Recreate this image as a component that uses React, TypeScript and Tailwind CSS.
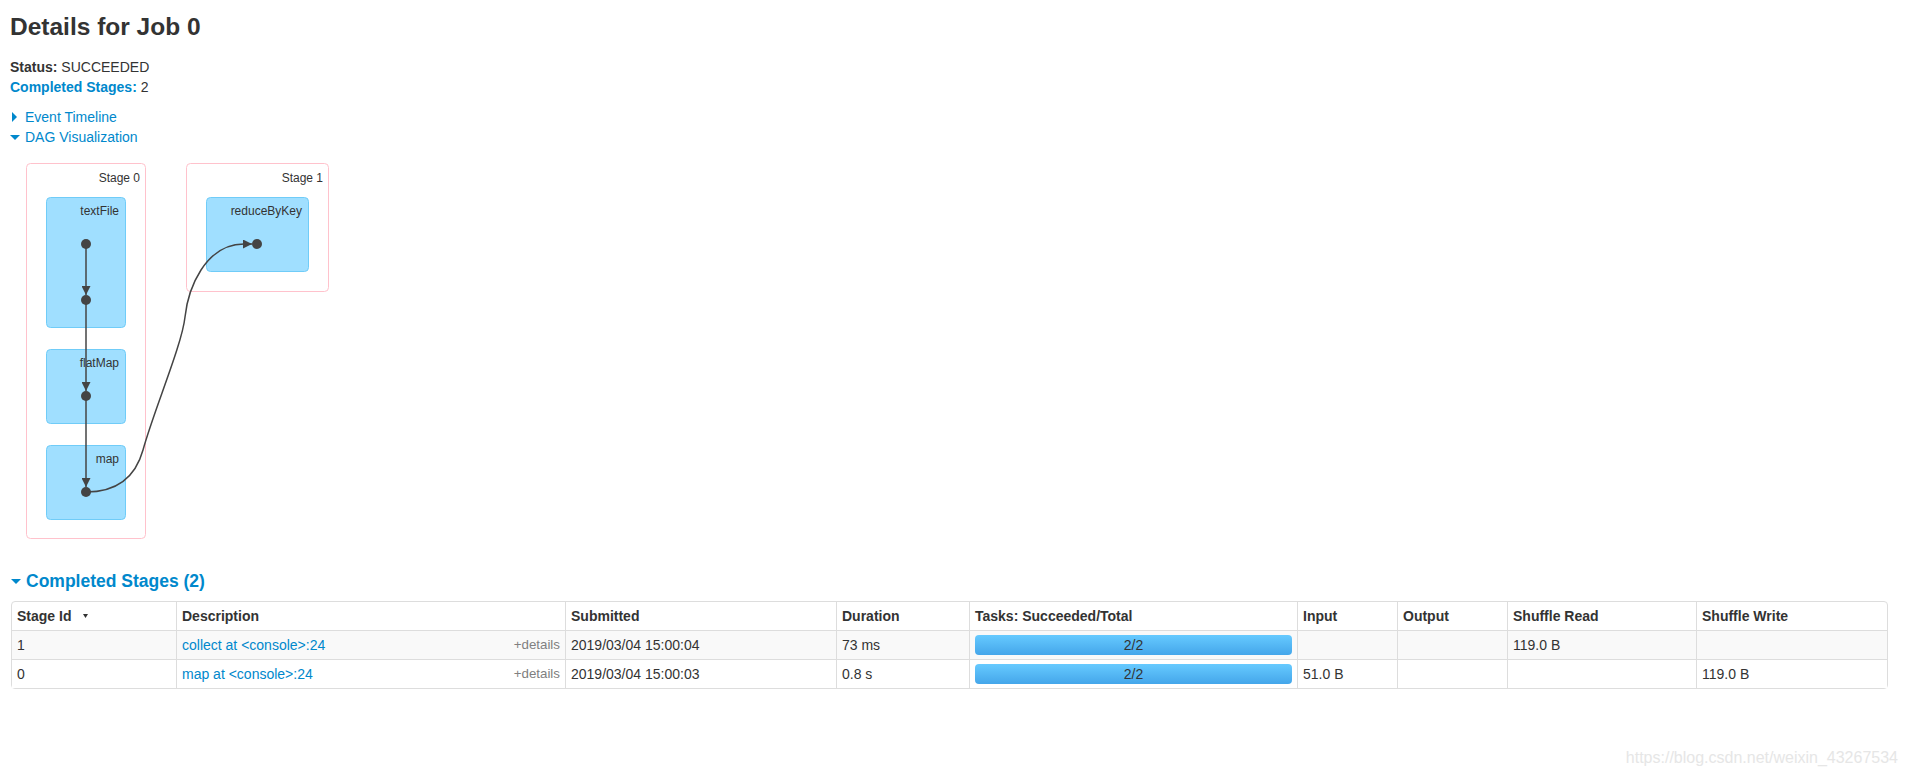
import React from "react";

const columns = [
  { label: "Stage Id", width: 164, sort: true },
  { label: "Description", width: 389 },
  { label: "Submitted", width: 271 },
  { label: "Duration", width: 133 },
  { label: "Tasks: Succeeded/Total", width: 328 },
  { label: "Input", width: 100 },
  { label: "Output", width: 110 },
  { label: "Shuffle Read", width: 189 },
  { label: "Shuffle Write", width: 191 },
];

const stages = [
  {
    id: "1",
    description: "collect at <console>:24",
    submitted: "2019/03/04 15:00:04",
    duration: "73 ms",
    tasks: "2/2",
    input: "",
    output: "",
    shuffleRead: "119.0 B",
    shuffleWrite: "",
  },
  {
    id: "0",
    description: "map at <console>:24",
    submitted: "2019/03/04 15:00:03",
    duration: "0.8 s",
    tasks: "2/2",
    input: "51.0 B",
    output: "",
    shuffleRead: "",
    shuffleWrite: "119.0 B",
  },
];

function ArrowOpen() {
  return (
    <span className="inline-block w-0 h-0 border-l-[5px] border-r-[5px] border-t-[5px] border-l-transparent border-r-transparent border-t-[#0088cc]" />
  );
}

function ArrowClosed() {
  return (
    <span className="inline-block w-0 h-0 border-t-[5px] border-b-[5px] border-l-[5px] border-t-transparent border-b-transparent border-l-[#0088cc]" />
  );
}

function DagViz() {
  const edge = "#444";
  return (
    <svg width={340} height={400} viewBox="0 147 340 400" className="block">
      <defs>
        <marker
          id="arrowhead"
          viewBox="0 0 10 10"
          refX={10}
          refY={5}
          markerUnits="userSpaceOnUse"
          markerWidth={10}
          markerHeight={9}
          orient="auto"
        >
          <path d="M0,0 L10,5 L0,10 z" fill={edge} />
        </marker>
      </defs>

      {/* stage clusters */}
      <rect x={26.5} y={163.5} width={119} height={375} rx={4} fill="#fff" stroke="#ffc2cc" />
      <rect x={186.5} y={163.5} width={142} height={128} rx={4} fill="#fff" stroke="#ffc2cc" />
      <text x={140} y={182} fontSize={12} textAnchor="end" fill="#333">
        Stage 0
      </text>
      <text x={323} y={182} fontSize={12} textAnchor="end" fill="#333">
        Stage 1
      </text>

      {/* rdd operation clusters */}
      <rect x={46.5} y={197.5} width={79} height={130} rx={4} fill="#a0dfff" stroke="#70ccf8" />
      <rect x={46.5} y={349.5} width={79} height={74} rx={4} fill="#a0dfff" stroke="#70ccf8" />
      <rect x={46.5} y={445.5} width={79} height={74} rx={4} fill="#a0dfff" stroke="#70ccf8" />
      <rect x={206.5} y={197.5} width={102} height={74} rx={4} fill="#a0dfff" stroke="#70ccf8" />
      <text x={119} y={215} fontSize={12} textAnchor="end" fill="#333">
        textFile
      </text>
      <text x={119} y={367} fontSize={12} textAnchor="end" fill="#333">
        flatMap
      </text>
      <text x={119} y={463} fontSize={12} textAnchor="end" fill="#333">
        map
      </text>
      <text x={302} y={215} fontSize={12} textAnchor="end" fill="#333">
        reduceByKey
      </text>

      {/* edges */}
      <g fill="none" stroke={edge} strokeWidth={1.5}>
        <path d="M86,244 L86,295" markerEnd="url(#arrowhead)" />
        <path d="M86,300 L86,391" markerEnd="url(#arrowhead)" />
        <path d="M86,396 L86,487" markerEnd="url(#arrowhead)" />
        <path
          d="M86,492 C125,492 138,468 143,450 C154,410 182,345 185,317 C188,289 205,244 244,244 L252,244"
          markerEnd="url(#arrowhead)"
        />
      </g>

      {/* nodes */}
      <g fill={edge}>
        <circle cx={86} cy={244} r={5} />
        <circle cx={86} cy={300} r={5} />
        <circle cx={86} cy={396} r={5} />
        <circle cx={86} cy={492} r={5} />
        <circle cx={257} cy={244} r={5} />
      </g>
    </svg>
  );
}

function ProgressBar({ text }: { text: string }) {
  return (
    <div className="h-5 rounded-[4px] bg-linear-to-b from-[#66caff] to-[#44a6ea] text-center leading-5 text-[#333]">
      {text}
    </div>
  );
}

export default function App() {
  return (
    <div className="relative w-[1908px] h-[784px] overflow-hidden bg-white font-['Liberation_Sans',Arial,sans-serif] text-[14px] leading-5 text-[#333]">
      <div className="pl-[10px]">
        <h3 className="mt-[7px] mb-[10px] text-[24.5px] leading-[40px] font-bold text-[#333]">
          Details for Job 0
        </h3>

        <ul>
          <li>
            <strong>Status:</strong> SUCCEEDED
          </li>
          <li>
            <a className="text-[#0088cc] font-bold">Completed Stages:</a> 2
          </li>
        </ul>

        <div className="mt-[10px]">
          <div className="flex items-center">
            <span className="w-[15px] flex items-center pl-[2px]">
              <ArrowClosed />
            </span>
            <a className="text-[#0088cc]">Event Timeline</a>
          </div>
          <div className="flex items-center">
            <span className="w-[15px] flex items-center">
              <ArrowOpen />
            </span>
            <a className="text-[#0088cc]">DAG Visualization</a>
          </div>
        </div>
      </div>

      <DagViz />

      <div className="pl-[10px]">
        <h4 className="mt-[24px] flex items-center text-[17.5px] leading-5 font-bold text-[#0088cc]">
          <span className="w-[16px] flex items-center pl-px">
            <ArrowOpen />
          </span>
          <a>Completed Stages (2)</a>
        </h4>

        <table className="ml-px mt-[10px] w-[1877px] table-fixed border-separate border-spacing-0 border border-[#ddd] rounded-[4px]">
          <colgroup>
            {columns.map((c) => (
              <col key={c.label} style={{ width: c.width }} />
            ))}
          </colgroup>
          <thead>
            <tr>
              {columns.map((c, i) => (
                <th
                  key={c.label}
                  className={`px-[5px] py-1 text-left font-bold leading-5 text-[#333] ${
                    i > 0 ? "border-l border-[#ddd]" : ""
                  }`}
                >
                  <span className="inline-flex items-center">
                    {c.label}
                    {c.sort && (
                      <svg width={5} height={4} viewBox="0 0 5 4" className="ml-[12px]">
                        <path d="M0,0 L5,0 L2.5,4 z" fill="#333" />
                      </svg>
                    )}
                  </span>
                </th>
              ))}
            </tr>
          </thead>
          <tbody>
            {stages.map((s, r) => {
              const bg = r === 0 ? "bg-[#f9f9f9]" : "bg-white";
              const cell = `px-[5px] py-1 leading-5 border-t border-[#ddd] ${bg}`;
              const celll = `${cell} border-l`;
              return (
                <tr key={s.id}>
                  <td className={cell}>{s.id}</td>
                  <td className={celll}>
                    <span className="float-right text-[13.33px] text-[#808080]">+details</span>
                    <a className="text-[#0088cc]">{s.description}</a>
                  </td>
                  <td className={celll}>{s.submitted}</td>
                  <td className={celll}>{s.duration}</td>
                  <td className={celll}>
                    <ProgressBar text={s.tasks} />
                  </td>
                  <td className={celll}>{s.input}</td>
                  <td className={celll}>{s.output}</td>
                  <td className={celll}>{s.shuffleRead}</td>
                  <td className={celll}>{s.shuffleWrite}</td>
                </tr>
              );
            })}
          </tbody>
        </table>
      </div>

      <div className="absolute right-[10px] top-[748px] text-[16px] leading-5 text-[#e6e6e6]">
        https://blog.csdn.net/weixin_43267534
      </div>
    </div>
  );
}
